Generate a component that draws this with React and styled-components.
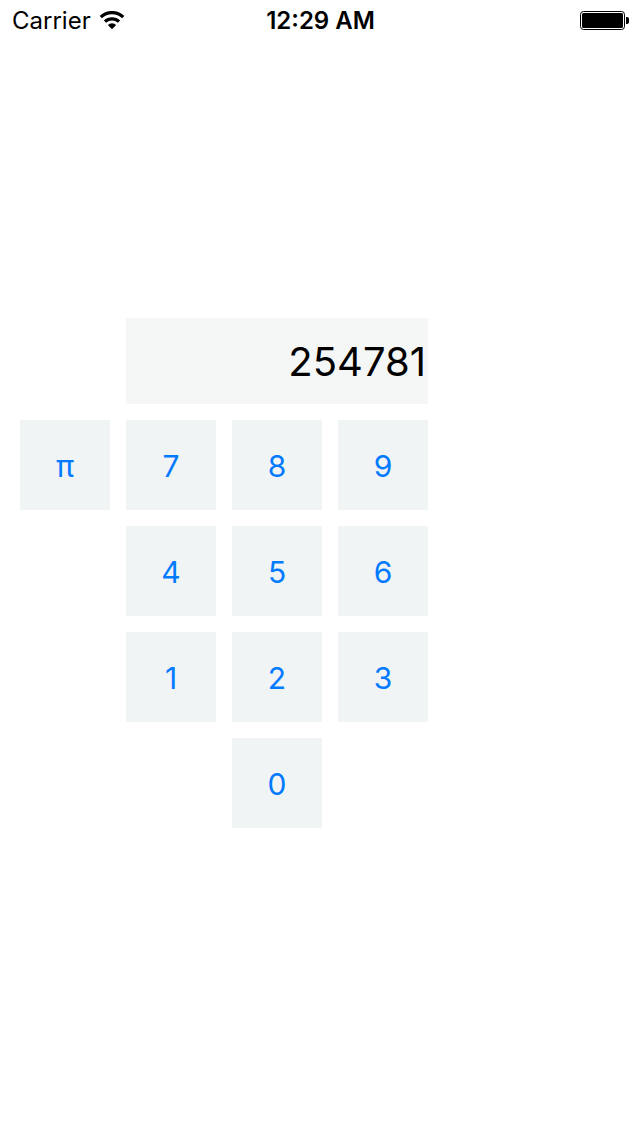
import React, { useState } from "react";
import styled, { createGlobalStyle } from "styled-components";

const GlobalStyle = createGlobalStyle`
  * { box-sizing: border-box; }
  body {
    margin: 0;
    background: #fff;
    color: #000;
    font-family: Inter, "Liberation Sans", sans-serif;
  }
`;

const Screen = styled.div`
  display: flex;
  flex-direction: column;
  min-height: 100vh;
`;

const StatusBar = styled.header`
  display: grid;
  grid-template-columns: 1fr auto 1fr;
  align-items: center;
  height: 42px;
  padding: 0 11px 0 12px;
  font-size: 24px;
  line-height: 42px;
`;

const Network = styled.div`
  display: flex;
  align-items: center;
  gap: 8px;
`;

const Clock = styled.time`
  font-weight: 600;
`;

const Battery = styled.svg`
  justify-self: end;
`;

const Calculator = styled.main`
  display: grid;
  grid-template-columns: repeat(4, 90px);
  grid-template-areas:
    ". display display display"
    "pi n7 n8 n9"
    ". n4 n5 n6"
    ". n1 n2 n3"
    ". . n0 .";
  gap: 16px;
  padding: 276px 20px 20px;
`;

const Display = styled.output`
  grid-area: display;
  height: 86px;
  padding: 2px 2px 0 0;
  background: #f5f7f6;
  font-size: 40px;
  line-height: 84px;
  text-align: right;
  overflow: hidden;
`;

const Key = styled.button`
  grid-area: ${({ $area }) => $area};
  height: 90px;
  padding: 2px 0 0;
  border: 0;
  background: #f0f4f5;
  color: #007aff;
  font-family: inherit;
  font-size: 30px;
  line-height: 36px;
  cursor: pointer;
`;

const digits = ["7", "8", "9", "4", "5", "6", "1", "2", "3", "0"];

export default function App() {
  const [value, setValue] = useState("254781");

  return (
    <Screen>
      <GlobalStyle />
      <StatusBar>
        <Network>
          <span>Carrier</span>
          <svg width="26" height="20" viewBox="0 0 26 20" role="img" aria-label="Wi-Fi">
            <g fill="none" stroke="#000" strokeWidth="3.2">
              <path d="M1.8 6.1a16 16 0 0 1 22.4 0" />
              <path d="M6 10.7a10 10 0 0 1 14 0" />
            </g>
            <path d="M12.2 17.5L8.9 14.1a5.6 5.6 0 0 1 8.2 0L13.8 17.5a1.1 1.1 0 0 1-1.6 0z" />
          </svg>
        </Network>
        <Clock>12:29 AM</Clock>
        <Battery width="49" height="20" viewBox="0 0 49 20" role="img" aria-label="Battery full">
          <rect x=".5" y=".5" width="44" height="18" rx="3" fill="none" stroke="#000" />
          <rect x="2" y="2" width="41" height="15" rx="1.5" />
          <path d="M46 6h1a2 2 0 0 1 2 2v3a2 2 0 0 1-2 2h-1z" />
        </Battery>
      </StatusBar>
      <Calculator>
        <Display aria-label="Result">{value}</Display>
        <Key $area="pi" type="button" onClick={() => setValue("3.14159")}>π</Key>
        {digits.map((digit) => (
          <Key
            key={digit}
            $area={`n${digit}`}
            type="button"
            onClick={() => setValue((current) => current + digit)}
          >
            {digit}
          </Key>
        ))}
      </Calculator>
    </Screen>
  );
}
